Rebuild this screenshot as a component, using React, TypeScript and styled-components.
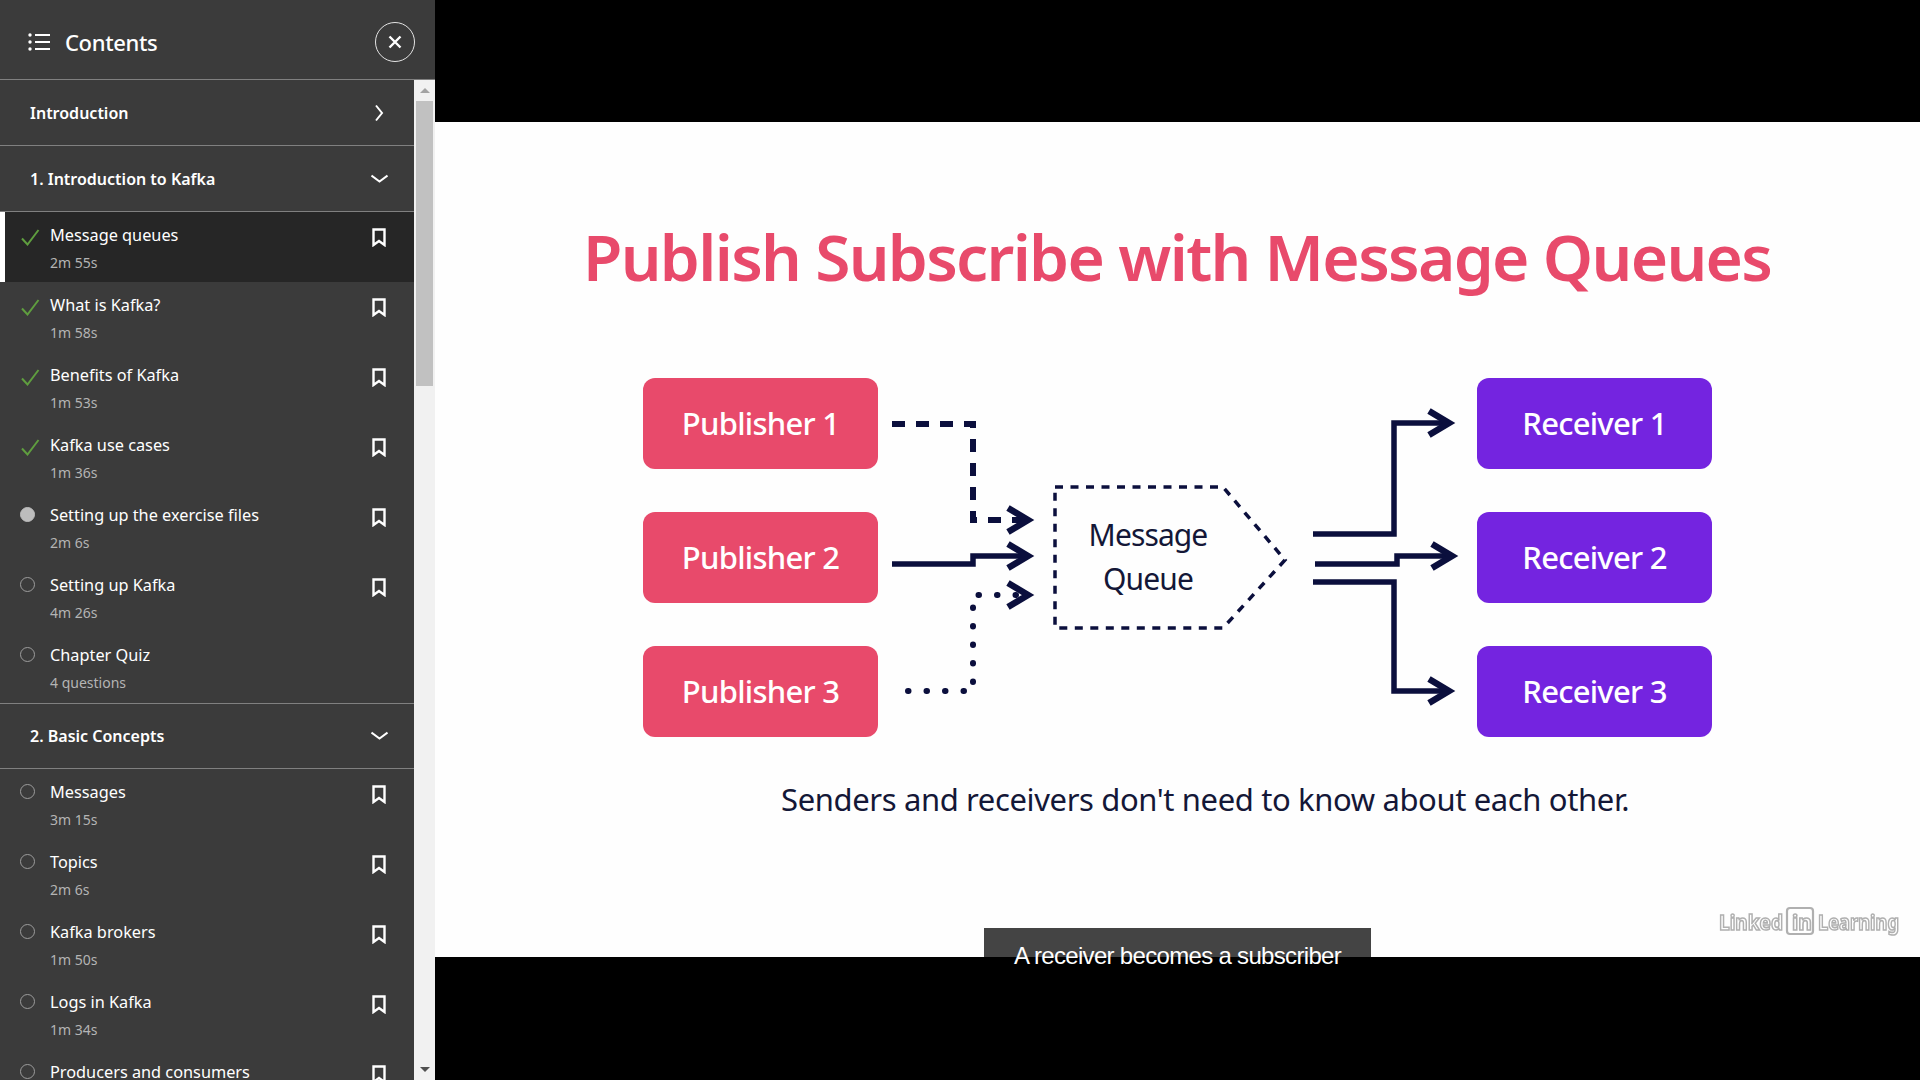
import styled, { createGlobalStyle } from "styled-components";

interface LessonData {
  title: string
  meta?: string
  status: "done" | "partial" | "todo"
  bookmark?: boolean
  active?: boolean
}

const chapterOne: LessonData[] = [
  { title: "Message queues", meta: "2m 55s", status: "done", bookmark: true, active: true },
  { title: "What is Kafka?", meta: "1m 58s", status: "done", bookmark: true },
  { title: "Benefits of Kafka", meta: "1m 53s", status: "done", bookmark: true },
  { title: "Kafka use cases", meta: "1m 36s", status: "done", bookmark: true },
  { title: "Setting up the exercise files", meta: "2m 6s", status: "partial", bookmark: true },
  { title: "Setting up Kafka", meta: "4m 26s", status: "todo", bookmark: true },
  { title: "Chapter Quiz", meta: "4 questions", status: "todo" },
];

const chapterTwo: LessonData[] = [
  { title: "Messages", meta: "3m 15s", status: "todo", bookmark: true },
  { title: "Topics", meta: "2m 6s", status: "todo", bookmark: true },
  { title: "Kafka brokers", meta: "1m 50s", status: "todo", bookmark: true },
  { title: "Logs in Kafka", meta: "1m 34s", status: "todo", bookmark: true },
  { title: "Producers and consumers", status: "todo", bookmark: true },
];

const GlobalStyle = createGlobalStyle`
  html, body { margin: 0; padding: 0; height: 100%; background: #000; overflow: hidden; }
  * { box-sizing: border-box; }
`

const Page = styled.div`
  width: 1920px;
  height: 1080px;
  display: flex;
  overflow: hidden;
  font-family: "Noto Sans", "Open Sans", sans-serif;
`
const Sidebar = styled.aside`
  width: 435px;
  height: 1080px;
  flex-shrink: 0;
  display: flex;
  flex-direction: column;
  background-color: #3b3b3b;
  color: #fff;
`
const SidebarHeader = styled.header`
  height: 80px;
  flex-shrink: 0;
  display: flex;
  align-items: center;
  padding: 5px 20px 0 28px;
  border-bottom: 1px solid #808080;
`
const HeaderTitle = styled.h1`
  margin: 0 0 0 15px;
  font-size: 22px;
  font-weight: 500;
  letter-spacing: -0.35px;
  flex: 1;
`
const CloseButton = styled.button`
  width: 40px;
  height: 40px;
  padding: 0;
  border: 1.5px solid #e4e4e4;
  border-radius: 50%;
  background: transparent;
  display: flex;
  align-items: center;
  justify-content: center;
`
const SidebarBody = styled.div`
  flex: 1;
  min-height: 0;
  display: flex;
`
const List = styled.div`
  width: 414px;
  overflow: hidden;
`
const SectionHeader = styled.div`
  height: 66px;
  display: flex;
  align-items: center;
  justify-content: space-between;
  padding: 0 26px 0 30px;
  border-bottom: 1px solid #808080;
  font-size: 16px;
  font-weight: 600;
`
const Lessons = styled.div<{ $closed?: boolean }>`
  padding-bottom: ${({ $closed }) => ($closed ? "1px" : "0")};
  border-bottom: ${({ $closed }) => ($closed ? "1px solid #808080" : "none")};
  margin-bottom: ${({ $closed }) => ($closed ? "-1px" : "0")};
`
const Row = styled.div<{ $active?: boolean }>`
  height: 70px;
  display: flex;
  padding: 12px 28px 0 0;
  background-color: ${({ $active }) => ($active ? "#262626" : "transparent")};
  box-shadow: ${({ $active }) => ($active ? "inset 5px 0 0 #fff" : "none")};
`
const StatusSlot = styled.div`
  width: 50px;
  flex-shrink: 0;
  display: flex;
  justify-content: flex-start;
  padding-left: 20px;
`
const Circle = styled.span<{ $filled?: boolean }>`
  width: 15px;
  height: 15px;
  margin-top: 3px;
  border-radius: 50%;
  border: 1.5px solid #9c9c9c;
  background-color: ${({ $filled }) => ($filled ? "#bdbdbd" : "transparent")};
  border-color: ${({ $filled }) => ($filled ? "#bdbdbd" : "#9c9c9c")};
`
const CheckIcon = styled.svg`
  width: 19px;
  height: 17px;
  margin-top: 5px;
  margin-left: 1px;
`
const LessonText = styled.div`
  flex: 1;
  min-width: 0;
`
const LessonTitle = styled.div`
  font-size: 16.3px;
  line-height: 22px;
  white-space: nowrap;
`
const LessonMeta = styled.div`
  margin-top: 7px;
  font-size: 14px;
  line-height: 20px;
  color: #b4b4b4;
`
const BookmarkIcon = styled.svg`
  width: 14px;
  height: 19px;
  margin-top: 4px;
  flex-shrink: 0;
`
const Scrollbar = styled.div`
  width: 21px;
  display: flex;
  flex-direction: column;
  align-items: center;
  background-color: #f1f1f1;
`
const ScrollArrow = styled.div<{ $up?: boolean }>`
  height: 21px;
  flex-shrink: 0;
  display: flex;
  align-items: center;
  justify-content: center;
  &::before {
    content: "";
    border-left: 5px solid transparent;
    border-right: 5px solid transparent;
    border-bottom: ${({ $up }) => ($up ? "5px solid #a3a3a3" : "none")};
    border-top: ${({ $up }) => ($up ? "none" : "5px solid #505050")};
  }
`
const ScrollTrack = styled.div`
  flex: 1;
  width: 100%;
  display: flex;
  justify-content: center;
`
const ScrollThumb = styled.div`
  width: 17px;
  height: 285px;
  background-color: #c1c1c1;
`
const Player = styled.main`
  flex: 1;
  display: flex;
  flex-direction: column;
  background-color: #000;
`
const Letterbox = styled.div<{ $height: number }>`
  height: ${({ $height }) => $height}px;
  flex-shrink: 0;
  background-color: #000;
`
const Slide = styled.section`
  position: relative;
  height: 835px;
  flex-shrink: 0;
  background-color: #fefefe;
  display: flex;
  flex-direction: column;
  font-family: "Noto Sans", sans-serif;
`
const SlideTitle = styled.h2`
  margin: 93px 0 0;
  height: 84px;
  line-height: 84px;
  padding-left: 148px;
  font-size: 64px;
  font-weight: 600;
  white-space: nowrap;
  letter-spacing: -1.67px;
  color: #e84a6b;
`
const Diagram = styled.div`
  margin-top: 79px;
  padding-left: 208px;
  display: flex;
`
const BoxColumn = styled.div`
  width: 235px;
  display: flex;
  flex-direction: column;
  gap: 43px;
`
const NodeBox = styled.div<{ $color: string }>`
  height: 91px;
  padding-bottom: 2px;
  border-radius: 12px;
  background-color: ${({ $color }) => $color};
  color: #fff;
  display: flex;
  align-items: center;
  justify-content: center;
  font-size: 31px;
  font-weight: 500;
  letter-spacing: -0.75px;
`
const Arrows = styled.svg`
  width: 599px;
  height: 359px;
  flex-shrink: 0;
`
const QueueLabel = styled.text`
  font-family: "Noto Sans", sans-serif;
  font-size: 30px;
  letter-spacing: -0.9px;
  fill: #141737;
  text-anchor: middle;
`
const Summary = styled.p`
  margin: 40px 0 0;
  padding-left: 346px;
  font-size: 31px;
  line-height: 44px;
  letter-spacing: -0.38px;
  white-space: nowrap;
  color: #141737;
`
const Caption = styled.div`
  position: absolute;
  left: 549px;
  top: 806px;
  width: 387px;
  height: 29px;
  padding-top: 15px;
  background-color: #444;
  color: #fff;
  font-family: "Liberation Sans", Arial, sans-serif;
  font-size: 24px;
  line-height: 26px;
  letter-spacing: -0.68px;
  text-align: center;
  white-space: nowrap;
`
const Watermark = styled.svg`
  position: absolute;
  left: 1283px;
  top: 784px;
  width: 184px;
  height: 34px;
  filter: blur(0.5px);
`
const WatermarkText = styled.text`
  font-family: "Noto Sans", sans-serif;
  font-size: 21px;
  font-weight: 700;
  fill: #fff;
  stroke: #b0b0b0;
  stroke-width: 1.6px;
`

function ListIcon() {
  return (
    <svg width="22" height="18" viewBox="0 0 22 18">
      <circle cx="2" cy="2" r="1.7" fill="#fff" />
      <circle cx="2" cy="9" r="1.7" fill="#fff" />
      <circle cx="2" cy="16" r="1.7" fill="#fff" />
      <path d="M7 2h15M7 9h15M7 16h15" stroke="#fff" strokeWidth="2" />
    </svg>
  );
}

function ChevronRight() {
  return (
    <svg width="17" height="18" viewBox="0 0 17 18">
      <path d="M5 1.5 L11 9 L5 16.5" fill="none" stroke="#fff" strokeWidth="2" />
    </svg>
  );
}

function ChevronDown() {
  return (
    <svg width="17" height="10" viewBox="0 0 17 10">
      <path d="M0.5 1.5 L8.5 7.5 L16.5 1.5" fill="none" stroke="#fff" strokeWidth="2" />
    </svg>
  );
}

function Lesson({ lesson }: { lesson: LessonData }) {
  return (
    <Row $active={lesson.active}>
      <StatusSlot>
        {lesson.status === "done" ? (
          <CheckIcon viewBox="0 0 19 17">
            <path d="M1 9.5 L6.5 15.5 L17.5 1" fill="none" stroke="#5f9e3f" strokeWidth="2" />
          </CheckIcon>
        ) : (
          <Circle $filled={lesson.status === "partial"} />
        )}
      </StatusSlot>
      <LessonText>
        <LessonTitle>{lesson.title}</LessonTitle>
        {lesson.meta && <LessonMeta>{lesson.meta}</LessonMeta>}
      </LessonText>
      {lesson.bookmark && (
        <BookmarkIcon viewBox="0 0 14 19">
          <path d="M1.5 1.5 H12.5 V17 L7 13 L1.5 17 Z" fill="none" stroke="#fff" strokeWidth="2.4" />
        </BookmarkIcon>
      )}
    </Row>
  );
}

const ink = "#0b0f3d";

function ArrowHead({ x, y }: { x: number, y: number }) {
  return <path d={`M${x - 20} ${y - 12} L${x} ${y} L${x - 20} ${y + 12}`} fill="none" stroke={ink} strokeWidth="6.5" />;
}

// coordinates are the screen ones, the viewBox starts at the diagram's top left corner
function DiagramArrows() {
  return (
    <Arrows viewBox="878 378 599 359">
      <path d="M892 424 H973 V520 H1022" fill="none" stroke={ink} strokeWidth="6" strokeDasharray="13 11" />
      <ArrowHead x={1028} y={520} />
      <path d="M892 564 H973 V556 H1024" fill="none" stroke={ink} strokeWidth="5.5" />
      <ArrowHead x={1028} y={556} />
      <path d="M908 691 H973 V595 H1018" fill="none" stroke={ink} strokeWidth="6" strokeLinecap="round" strokeDasharray="0.5 18" />
      <ArrowHead x={1028} y={595} />
      <path d="M1055 487 H1223 L1285 560 L1223 628 H1055 Z" fill="none" stroke={ink} strokeWidth="3.5" strokeDasharray="8 7.5" />
      <QueueLabel x="1148" y="546">Message</QueueLabel>
      <QueueLabel x="1148" y="590">Queue</QueueLabel>
      <path d="M1313 534 H1394 V423 H1446" fill="none" stroke={ink} strokeWidth="5.5" />
      <ArrowHead x={1449} y={423} />
      <path d="M1315 564 H1397 V556 H1449" fill="none" stroke={ink} strokeWidth="5.5" />
      <ArrowHead x={1452} y={556} />
      <path d="M1313 582 H1394 V691 H1446" fill="none" stroke={ink} strokeWidth="5.5" />
      <ArrowHead x={1449} y={691} />
    </Arrows>
  );
}

export default function App() {
  return (
    <Page>
      <GlobalStyle />
      <Sidebar>
        <SidebarHeader>
          <ListIcon />
          <HeaderTitle>Contents</HeaderTitle>
          <CloseButton aria-label="Close">
            <svg width="14" height="14" viewBox="0 0 14 14">
              <path d="M1.5 1.5 L12.5 12.5 M12.5 1.5 L1.5 12.5" stroke="#fff" strokeWidth="2.4" />
            </svg>
          </CloseButton>
        </SidebarHeader>
        <SidebarBody>
          <List>
            <SectionHeader>Introduction<ChevronRight /></SectionHeader>
            <SectionHeader>1. Introduction to Kafka<ChevronDown /></SectionHeader>
            <Lessons $closed>
              {chapterOne.map((lesson) => <Lesson key={lesson.title} lesson={lesson} />)}
            </Lessons>
            <SectionHeader>2. Basic Concepts<ChevronDown /></SectionHeader>
            <Lessons>
              {chapterTwo.map((lesson) => <Lesson key={lesson.title} lesson={lesson} />)}
            </Lessons>
          </List>
          <Scrollbar>
            <ScrollArrow $up />
            <ScrollTrack><ScrollThumb /></ScrollTrack>
            <ScrollArrow />
          </Scrollbar>
        </SidebarBody>
      </Sidebar>
      <Player>
        <Letterbox $height={122} />
        <Slide>
          <SlideTitle>Publish Subscribe with Message Queues</SlideTitle>
          <Diagram>
            <BoxColumn>
              <NodeBox $color="#e84a6b">Publisher 1</NodeBox>
              <NodeBox $color="#e84a6b">Publisher 2</NodeBox>
              <NodeBox $color="#e84a6b">Publisher 3</NodeBox>
            </BoxColumn>
            <DiagramArrows />
            <BoxColumn>
              <NodeBox $color="#7424e0">Receiver 1</NodeBox>
              <NodeBox $color="#7424e0">Receiver 2</NodeBox>
              <NodeBox $color="#7424e0">Receiver 3</NodeBox>
            </BoxColumn>
          </Diagram>
          <Summary>Senders and receivers don't need to know about each other.</Summary>
          <Watermark viewBox="0 0 184 34">
            <WatermarkText x="1" y="24" textLength="64" lengthAdjust="spacingAndGlyphs">Linked</WatermarkText>
            <rect x="69" y="2" width="26" height="26" rx="3" fill="#fff" stroke="#b0b0b0" strokeWidth="2.2" />
            <WatermarkText x="74" y="24">in</WatermarkText>
            <WatermarkText x="100" y="24" textLength="81" lengthAdjust="spacingAndGlyphs">Learning</WatermarkText>
          </Watermark>
          <Caption>A receiver becomes a subscriber</Caption>
        </Slide>
        <Letterbox $height={123} />
      </Player>
    </Page>
  );
}
